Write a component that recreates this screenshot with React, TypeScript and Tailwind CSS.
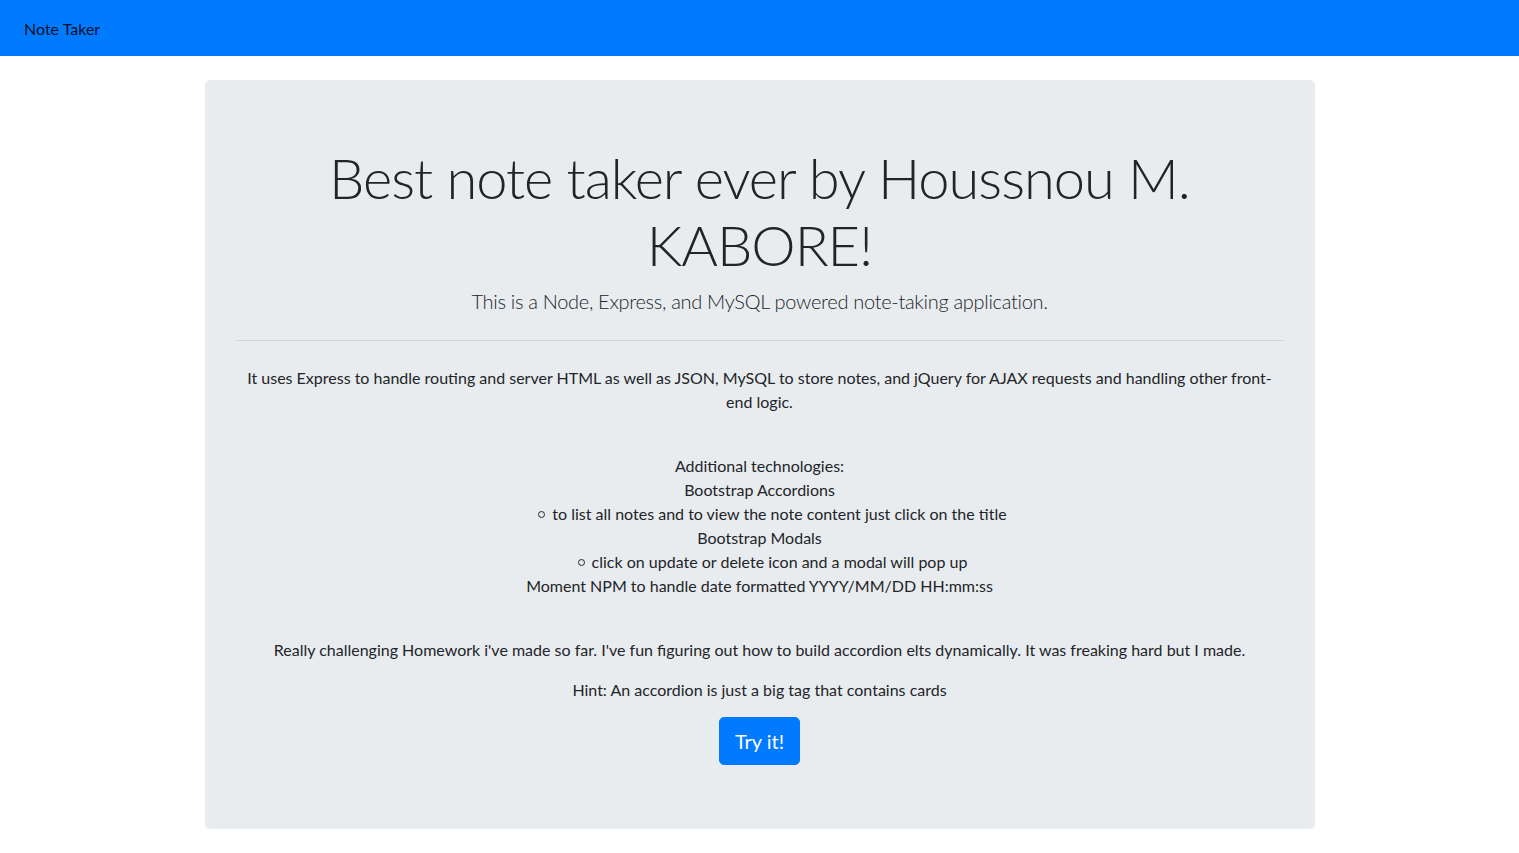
function Bullet({ children }: { children: React.ReactNode }) {
  return (
    <p className="pl-[40px]">
      <span className="-ml-[14px] mr-[7px] inline-block h-[7px] w-[7px] -translate-y-[2px] rounded-full border border-[#212529]"></span>
      {children}
    </p>
  )
}

export default function App() {
  return (
    <div className="min-h-screen bg-white text-[16px] leading-[1.5] text-[#212529] font-['Lato',sans-serif]">
      <nav className="flex h-[56px] items-center bg-[#007bff] px-[24px] pt-[2px]">
        <span className="text-[16px] text-black/90">Note Taker</span>
      </nav>

      <div className="mx-auto mt-[24px] w-[1110px]">
        <div className="rounded-[5px] bg-[#e9ecef] px-[32px] pt-[64px] pb-[64px] text-center">
          <h1 className="mb-[8px] text-[56px] leading-[1.2] font-light tracking-[-1px]">
            Best note taker ever by Houssnou M. KABORE!
          </h1>
          <p className="text-[20px] font-light tracking-[-0.3px]">
            This is a Node, Express, and MySQL powered note-taking application.
          </p>
          <hr className="mt-[24px] mb-[25px] border-t border-black/10" />
          <p>
            It uses Express to handle routing and server HTML as well as JSON, MySQL to store notes, and jQuery for AJAX
            requests and handling other front-end logic.
          </p>
          <div className="mt-[40px]">
            <p>Additional technologies:</p>
            <p>Bootstrap Accordions</p>
            <Bullet>to list all notes and to view the note content just click on the title</Bullet>
            <p>Bootstrap Modals</p>
            <Bullet>click on update or delete icon and a modal will pop up</Bullet>
            <p>Moment NPM to handle date formatted YYYY/MM/DD HH:mm:ss</p>
          </div>
          <p className="mt-[40px]">
            Really challenging Homework i've made so far. I've fun figuring out how to build accordion elts dynamically. It
            was freaking hard but I made.
          </p>
          <p className="mt-[16px]">Hint: An accordion is just a big tag that contains cards</p>
          <button className="mt-[15px] rounded-[5px] border border-[#007bff] bg-[#007bff] px-[15px] py-[8px] text-[20px] leading-[1.5] text-white">
            Try it!
          </button>
        </div>
      </div>
    </div>
  )
}
